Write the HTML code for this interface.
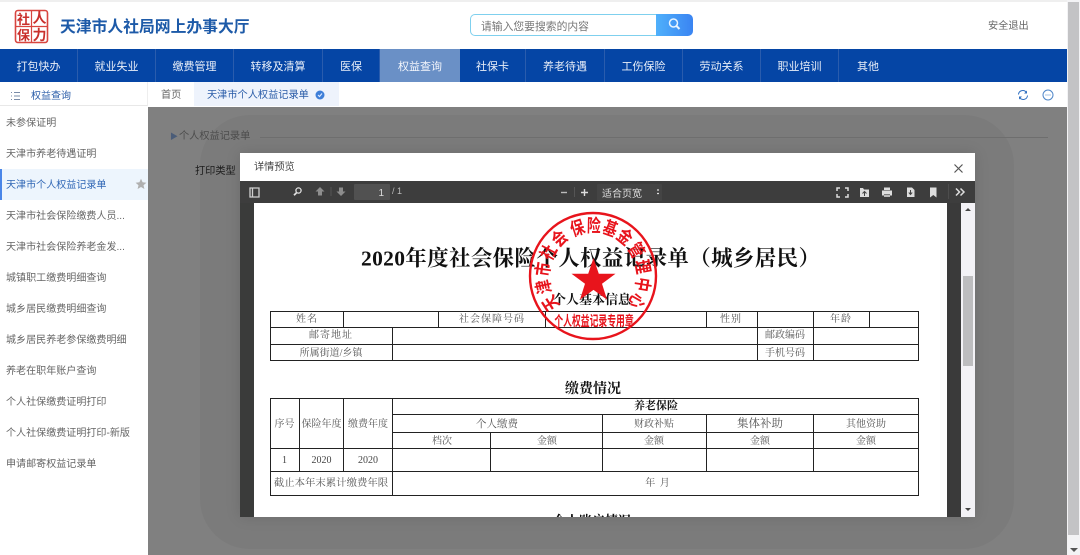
<!DOCTYPE html>
<html lang="zh">
<head>
<meta charset="utf-8">
<title>天津市人社局网上办事大厅</title>
<style>
html,body{margin:0;padding:0;width:1080px;height:555px;overflow:hidden;background:#fff;}
body{font-family:"Liberation Sans","Noto Sans CJK SC",sans-serif;color:#555;}
#w{position:absolute;left:0;top:0;width:1080px;height:555px;overflow:hidden;filter:blur(.3px);}
.a{position:absolute;white-space:nowrap;}
.nav{position:absolute;top:49px;height:33px;line-height:37px;text-align:center;color:#e8eef8;font-size:11px;border-right:1px solid #2a5cad;box-sizing:border-box;}
.side{position:absolute;left:0;width:148px;height:31px;line-height:33px;font-size:10.05px;color:#666;box-sizing:border-box;padding-left:6px;white-space:nowrap;}
svg text{white-space:pre;}
.s{font-family:"Liberation Serif","Noto Serif CJK SC",serif;}
</style>
</head>
<body>
<div id="w">
<div class="a" style="left:0;top:0;width:1080px;height:2px;background:#efefef"></div>

<!-- logo -->
<svg class="a" style="left:14px;top:9px" width="36" height="36" viewBox="0 0 36 36">
<rect x="1.5" y="1.5" width="32" height="32" rx="2.5" fill="#fff" stroke="#d8453f" stroke-width="1.6"/>
<path d="M1.5 17.5H33.5M17.5 1.5V33.5" stroke="#d8453f" stroke-width="1.2"/>
<text x="9.5" y="15" text-anchor="middle" font-size="13" font-weight="700" fill="#c9302c" font-family="Noto Sans CJK SC">社</text>
<text x="25.5" y="14" text-anchor="middle" font-size="14" fill="#c9302c" font-weight="700" font-family="Noto Sans CJK SC">人</text>
<text x="9.5" y="31" text-anchor="middle" font-size="13" fill="#c9302c" font-weight="700" font-family="Noto Sans CJK SC">保</text>
<text x="25.5" y="31" text-anchor="middle" font-size="14" fill="#c9302c" font-weight="700" font-family="Noto Sans CJK SC">力</text>
</svg>
<div class="a" style="left:60px;top:16px;font-size:15.8px;line-height:24px;font-weight:700;color:#1d5aa8">天津市人社局网上办事大厅</div>

<!-- search -->
<div class="a" style="left:470px;top:14px;width:187px;height:22px;border:1px solid #7fd0ee;border-right:0;border-radius:5px 0 0 5px;box-sizing:border-box;font-size:10.8px;line-height:24px;color:#777;padding-left:10px;background:#fff">请输入您要搜索的内容</div>
<div class="a" style="left:656px;top:14px;width:37px;height:22px;border-radius:0 5px 5px 0;background:linear-gradient(90deg,#4fb0fb,#3a84f2)"></div>
<svg class="a" style="left:667px;top:17px" width="15" height="15" viewBox="0 0 15 15"><circle cx="6.5" cy="6" r="4" fill="none" stroke="#e8f4ff" stroke-width="1.5"/><path d="M9.5 9l3 3" stroke="#e8f4ff" stroke-width="2"/></svg>
<div class="a" style="left:988px;top:20px;font-size:10.2px;line-height:14px;color:#666">安全退出</div>

<!-- nav -->
<div class="a" style="left:0;top:49px;width:1067px;height:33px;background:#0545a5"></div>
<div class="nav" style="left:0;width:78px">打包快办</div>
<div class="nav" style="left:78px;width:78px">就业失业</div>
<div class="nav" style="left:156px;width:78px">缴费管理</div>
<div class="nav" style="left:234px;width:89px">转移及清算</div>
<div class="nav" style="left:323px;width:57px">医保</div>
<div class="nav" style="left:380px;width:80px;background:#6a90c6;color:#f2f5fb;border:0">权益查询</div>
<div class="nav" style="left:460px;width:66px">社保卡</div>
<div class="nav" style="left:526px;width:79px">养老待遇</div>
<div class="nav" style="left:605px;width:78px">工伤保险</div>
<div class="nav" style="left:683px;width:78px">劳动关系</div>
<div class="nav" style="left:761px;width:78px">职业培训</div>
<div class="nav" style="left:839px;width:58px;border:0">其他</div>

<!-- second row -->
<div class="a" style="left:0;top:82px;width:148px;height:24px;border-bottom:1px solid #e8e8e8;border-right:1px solid #eee;box-sizing:border-box"></div>
<svg class="a" style="left:10px;top:91px" width="12" height="10" viewBox="0 0 12 10"><path d="M1 1.5h1M4 1.5h6M1 5h1M4 5h6M1 8.500h1M4 8.500h6" stroke="#7a8ca8" stroke-width="1"/></svg>
<div class="a" style="left:31px;top:90px;font-size:10px;line-height:14px;color:#2a5ca8">权益查询</div>
<div class="a" style="left:161px;top:89px;font-size:10.2px;line-height:14px;color:#666">首页</div>
<div class="a" style="left:194px;top:82px;width:145px;height:24px;background:#eef3fc"></div>
<div class="a" style="left:207px;top:89px;font-size:10.2px;line-height:14px;color:#2a5ca8">天津市个人权益记录单</div>
<svg class="a" style="left:315px;top:90px" width="10" height="10" viewBox="0 0 10 10"><circle cx="5" cy="5" r="4.500" fill="#3f7fd8"/><path d="M3 5l1.500 1.500L7 3.500" stroke="#dfeaff" stroke-width="1.100" fill="none"/></svg>
<svg class="a" style="left:1016px;top:88px" width="14" height="14" viewBox="0 0 14 14"><path d="M2.500 6.500a4.300 4.300 0 0 1 8-1.800M11.500 7.500a4.300 4.300 0 0 1-8 1.800" fill="none" stroke="#2f6fc0" stroke-width="1"/><path d="M11 2.500v3h-3zM3 11.500v-3h3z" fill="#2f6fc0"/></svg>
<svg class="a" style="left:1041px;top:88px" width="14" height="14" viewBox="0 0 14 14"><circle cx="7" cy="7" r="5" fill="none" stroke="#4f86c8" stroke-width="1"/><path d="M4.500 7h1M6.500 7h1M8.500 7h1" stroke="#4f86c8" stroke-width="1"/></svg>

<!-- sidebar -->
<div class="side" style="top:107px;">未参保证明</div>
<div class="side" style="top:138px;">天津市养老待遇证明</div>
<div class="side" style="top:169px;background:#edf5fd;color:#2f66b5;border-left:2px solid #4a86e8;padding-left:4px;">天津市个人权益记录单</div>
<svg class="a" style="left:135px;top:178px" width="12" height="12" viewBox="0 0 12 12"><path d="M6 .8l1.600 3.500 3.800.4-2.900 2.500.9 3.800L6 9l-3.400 2 .9-3.800L.6 4.700l3.800-.4z" fill="#b0b0b0"/></svg>
<div class="side" style="top:200px;">天津市社会保险缴费人员...</div>
<div class="side" style="top:231px;">天津市社会保险养老金发...</div>
<div class="side" style="top:262px;">城镇职工缴费明细查询</div>
<div class="side" style="top:293px;">城乡居民缴费明细查询</div>
<div class="side" style="top:324px;">城乡居民养老参保缴费明细</div>
<div class="side" style="top:355px;">养老在职年账户查询</div>
<div class="side" style="top:386px;">个人社保缴费证明打印</div>
<div class="side" style="top:417px;">个人社保缴费证明打印-新版</div>
<div class="side" style="top:448px;">申请邮寄权益记录单</div>

<!-- overlay -->
<div class="a" style="left:148px;top:107px;width:919px;height:448px;background:#808080;overflow:hidden">
  <div class="a" style="left:52px;top:8px;width:814px;height:434px;border-radius:50px;background:#7b7b7b"></div>
  <div class="a" style="left:22px;top:25px;color:#4a5c78;font-size:8px;line-height:10px">▶</div>
  <div class="a" style="left:31px;top:23px;font-size:10.2px;line-height:14px;color:#4c4c4c">个人权益记录单</div>
  <div class="a" style="left:112px;top:30px;width:788px;height:1px;background:#6e6e6e"></div>
  <div class="a" style="left:47px;top:57px;font-size:10.2px;line-height:15px;color:#1c1c1c">打印类型</div>
</div>
<!-- page scrollbar -->
<div class="a" style="left:1067px;top:0;width:13px;height:555px;background:#f3f3f5"></div>
<div class="a" style="left:1068px;top:2px;width:11px;height:533px;background:#c3c3c5"></div>
<svg class="a" style="left:1069px;top:547px" width="10" height="6"><path d="M1 1h8L5 5z" fill="#555"/></svg>

<!-- modal -->
<div class="a" style="left:240px;top:153px;width:735px;height:364px;background:#fff;box-shadow:0 0 14px rgba(0,0,0,.12)">
  <div class="a" style="left:14px;top:8px;font-size:10.2px;line-height:14px;color:#444">详情预览</div>
  <svg class="a" style="left:713px;top:10px" width="11" height="11" viewBox="0 0 11 11"><path d="M1.500 1.500l8 8M9.500 1.500l-8 8" stroke="#555" stroke-width="1.200"/></svg>
</div>

<svg class="a" style="left:240px;top:181px" width="735" height="336" viewBox="240 181 735 336">
  <defs>
    <clipPath id="c"><rect x="254" y="203" width="693" height="314"/></clipPath>
  </defs>
  <rect x="240" y="181" width="735" height="22" fill="#3d3d3d"/>
  <rect x="240" y="203" width="14" height="314" fill="#3a3b3a"/>
  <rect x="947" y="203" width="14" height="314" fill="#3a3a3a"/>
  <rect x="254" y="203" width="693" height="314" fill="#fff"/>
  <rect x="961" y="203" width="14" height="314" fill="#f3f2f6"/>
  <rect x="963" y="276" width="10" height="90" fill="#bdbdbf"/>
  <path d="M965 211l3-3 3 3zM965 508l3 3 3-3z" fill="#444"/>

  <!-- toolbar left -->
  <path d="M250 188h9v9h-9zM252.500 188v9" fill="none" stroke="#cfcfcf" stroke-width="1.300"/>
  <circle cx="298.500" cy="190.500" r="2.600" fill="none" stroke="#e0e0e0" stroke-width="1.300"/><path d="M296.500 192.800l-2.500 2.500" stroke="#e0e0e0" stroke-width="1.800"/>
  <path d="M320 187l4.500 4.500h-2.500v4h-4v-4h-2.500z" fill="#8d8d8d"/>
  <path d="M341 196l4.500-4.500h-2.500v-4h-4v4h-2.500z" fill="#8d8d8d"/>
  <rect x="330.500" y="187" width="1" height="9" fill="#555"/>
  <rect x="354" y="184" width="36" height="16" rx="1" fill="#515151"/>
  <text x="384" y="196" text-anchor="end" font-size="10" fill="#ddd" font-family="Liberation Sans">1</text>
  <text x="392" y="194" font-size="9" fill="#bbb" font-family="Liberation Sans">/ 1</text>
  <path d="M561 192.500h6" stroke="#bbb" stroke-width="1.400"/>
  <path d="M581 192.500h7M584.500 189v7" stroke="#ddd" stroke-width="1.400"/>
  <rect x="574" y="187" width="1" height="10" fill="#555"/>
  <rect x="597" y="184" width="65" height="17" rx="1" fill="#444"/>
  <text x="602" y="197" font-size="10" fill="#ddd" font-family="Noto Sans CJK SC">适合页宽</text>
  <path d="M657 190h2M657 193.500h2" stroke="#ddd" stroke-width="1.300"/>

  <!-- toolbar right -->
  <path d="M837 191v-3h3M845 188h3v3M848 194v3h-3M840 197h-3v-3" fill="none" stroke="#ddd" stroke-width="1.500"/>
  <path d="M860 188h3l1 1.500h5v7.500h-9z" fill="#ddd"/><path d="M864.500 196v-4M862.500 193.500l2-2 2 2" stroke="#444" stroke-width="1" fill="none"/>
  <path d="M884 187.500h6v2.500h-6zM882 190.500h10v5h-2v-1.500h-6v1.500h-2z" fill="#ddd"/><rect x="884" y="194.500" width="6" height="2.500" fill="#bbb"/>
  <path d="M907 187.500h5l2.500 2.500v7h-7.500z" fill="#ddd"/><path d="M910.500 190v4M908.800 192.500l1.700 2 1.700-2" stroke="#444" stroke-width="1" fill="none"/>
  <path d="M930 187.500h6.500v10l-3.200-2.500-3.300 2.500z" fill="#ddd"/>
  <rect x="948" y="184" width="1" height="15" fill="#4d4d4d"/>
  <path d="M956 188.500l3.500 3.500-3.500 3.500M960.500 188.500l3.500 3.500-3.500 3.500" fill="none" stroke="#ddd" stroke-width="1.500"/>

  <g clip-path="url(#c)">
    <g class="s" fill="#111">
      <text x="361" y="265.500" font-size="21.500" font-weight="700" textLength="459" lengthAdjust="spacing">2020年度社会保险个人权益记录单（城乡居民）</text>
      <text x="553" y="304" font-size="13" font-weight="700">个人基本信息</text>
      <text x="565" y="393" font-size="14" font-weight="700">缴费情况</text>
      <text x="634" y="409" font-size="11" font-weight="700">养老保险</text>
      <text x="553" y="525" font-size="13" font-weight="700">个人账户情况</text>
    </g>

    <g fill="none" stroke="#222" stroke-width="1">
      <rect x="270.500" y="311.500" width="648" height="49"/>
      <path d="M270 327.500H919M270 344.500H919"/>
      <path d="M343.500 311v16M438.500 311v16M545.500 311v16M706.500 311v16M757.500 311v49M813.500 311v49M869.500 311v16M392.500 327v33"/>
      <rect x="270.500" y="398.500" width="648" height="97"/>
      <path d="M392 414.500H919M392 432.500H919M270 448.500H919M270 471.500H919"/>
      <path d="M299.500 398v73M343.500 398v73M392.500 398v97M490.500 432v39M602.500 414v57M706.500 414v57M813.500 414v57"/>
    </g>

    <g class="s" fill="#555" font-size="10" text-anchor="middle">
      <text x="307" y="322" letter-spacing="1">姓名</text>
      <text x="492" y="322" letter-spacing="1">社会保障号码</text>
      <text x="731" y="322" letter-spacing="1">性别</text>
      <text x="841" y="322" letter-spacing="1">年龄</text>
      <text x="331" y="338" letter-spacing="1">邮寄地址</text>
      <text x="785" y="338">邮政编码</text>
      <text x="331" y="356">所属街道/乡镇</text>
      <text x="785" y="356">手机号码</text>
      <text x="284.500" y="427">序号</text>
      <text x="321.500" y="427">保险年度</text>
      <text x="368" y="427">缴费年度</text>
      <text x="497" y="427" font-size="10.500">个人缴费</text>
      <text x="654" y="427">财政补贴</text>
      <text x="760" y="427" font-size="11.500">集体补助</text>
      <text x="866" y="427">其他资助</text>
      <text x="442" y="444">档次</text>
      <text x="547" y="444">金额</text>
      <text x="654" y="444">金额</text>
      <text x="760" y="444">金额</text>
      <text x="866" y="444">金额</text>
      <text x="284.500" y="463" fill="#444">1</text>
      <text x="321.500" y="463" fill="#444">2020</text>
      <text x="368" y="463" fill="#444">2020</text>
      <text x="331" y="486" font-size="10.400">截止本年末累计缴费年限</text>
      <text x="658" y="486" letter-spacing="1">年 月</text>
    </g>

    <!-- seal -->
    <g fill="#e8141c">
      <circle cx="593" cy="276" r="63" fill="none" stroke="#e8141c" stroke-width="2.400"/>
      <path d="M593.500 258l5.300 15.800h16.700l-13.500 9.900 5.100 16-13.600-9.800-13.600 9.800 5.100-16-13.500-9.900h16.700z"/>
      <g font-size="14" font-weight="700" font-family="Noto Sans CJK SC" text-anchor="middle">
        <text transform="translate(593 276) rotate(-122.6) translate(0 -44) scale(1 1.3)">天</text>
        <text transform="translate(593 276) rotate(-102.4) translate(0 -44) scale(1 1.3)">津</text>
        <text transform="translate(593 276) rotate(-82.2) translate(0 -44) scale(1 1.3)">市</text>
        <text transform="translate(593 276) rotate(-62) translate(0 -44) scale(1 1.3)">社</text>
        <text transform="translate(593 276) rotate(-41.8) translate(0 -44) scale(1 1.3)">会</text>
        <text transform="translate(593 276) rotate(-18) translate(0 -44) scale(1 1.3)">保</text>
        <text transform="translate(593 276) rotate(1) translate(0 -44) scale(1 1.3)">险</text>
        <text transform="translate(593 276) rotate(20) translate(0 -44) scale(1 1.3)">基</text>
        <text transform="translate(593 276) rotate(39) translate(0 -44) scale(1 1.3)">金</text>
        <text transform="translate(593 276) rotate(59.2) translate(0 -44) scale(1 1.3)">管</text>
        <text transform="translate(593 276) rotate(79.4) translate(0 -44) scale(1 1.3)">理</text>
        <text transform="translate(593 276) rotate(99.6) translate(0 -44) scale(1 1.3)">中</text>
        <text transform="translate(593 276) rotate(119.8) translate(0 -44) scale(1 1.3)">心</text>
      </g>
      <text transform="translate(594 326) scale(.63 1)" text-anchor="middle" font-size="14" font-weight="700" font-family="Noto Sans CJK SC">个人权益记录专用章</text>
    </g>
  </g>
</svg>
</div>
</body>
</html>
